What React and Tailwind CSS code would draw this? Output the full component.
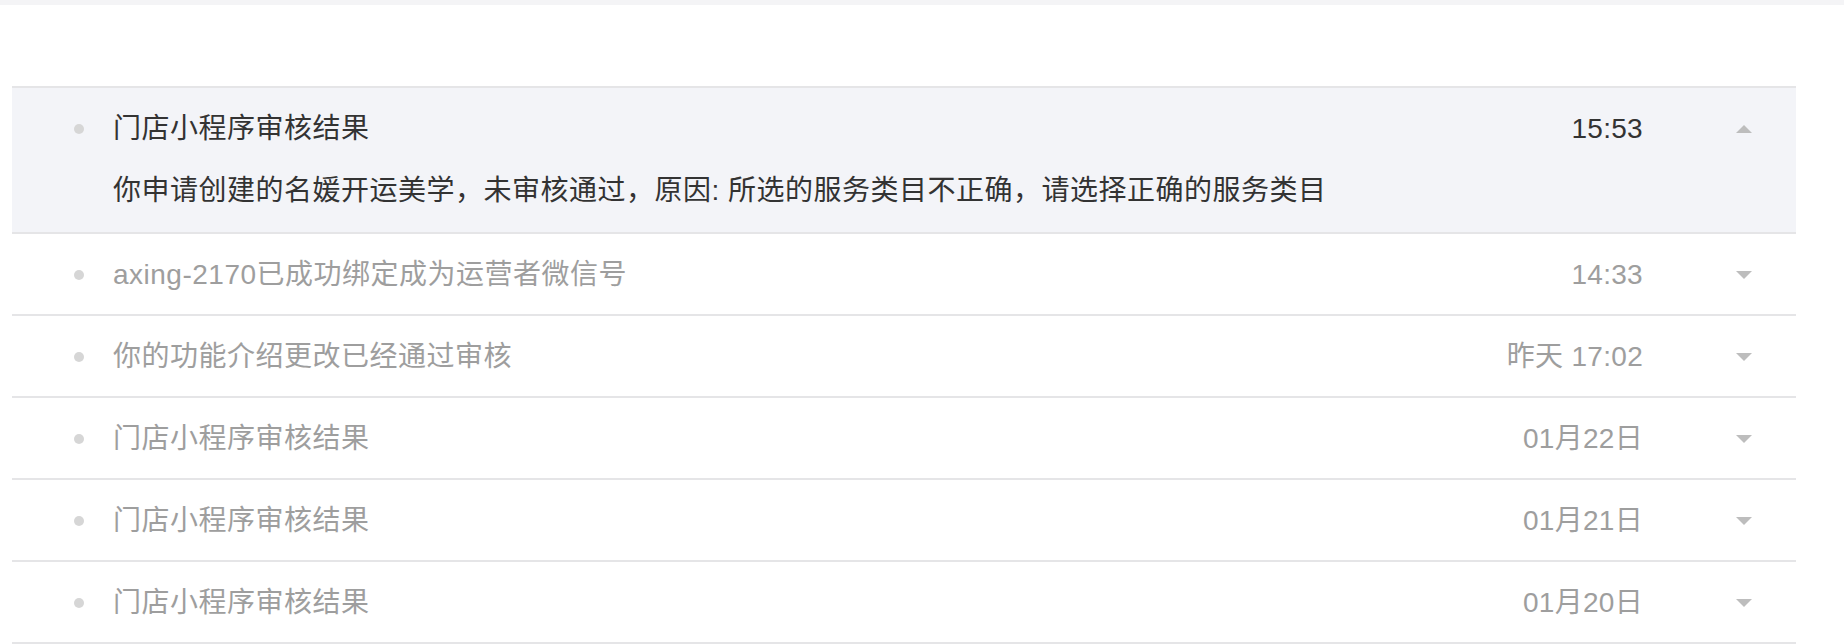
import React from "react";

const rows = [
  { title: "axing-2170已成功绑定成为运营者微信号", time: "14:33" },
  { title: "你的功能介绍更改已经通过审核", time: "昨天 17:02" },
  { title: "门店小程序审核结果", time: "01月22日" },
  { title: "门店小程序审核结果", time: "01月21日" },
  { title: "门店小程序审核结果", time: "01月20日" },
];

const font = { fontFamily: '"Liberation Sans", "Noto Sans CJK SC", sans-serif' };

function Header({ title, time, open }) {
  return (
    <div className="flex h-[80px] items-center pl-[62px] pr-[44px] pt-[2px]">
      <span className="mr-[29px] h-[10px] w-[10px] shrink-0 rounded-full bg-[#d6d6d6]" />
      <span className={`flex-1 text-[28px] leading-[40px] tracking-[0.5px] ${open ? "text-[#333333]" : "text-[#9e9e9e]"}`}>{title}</span>
      <span className={`text-[28px] leading-[40px] tracking-[0.3px] ${open ? "text-[#333333]" : "text-[#9e9e9e]"}`}>{time}</span>
      <span className="ml-[93px] flex h-[16px] w-[16px] items-center justify-center">
        {open ? (
          <span className="h-0 w-0 border-x-[8px] border-b-[8px] border-x-transparent border-b-[#bdbdbd]" />
        ) : (
          <span className="h-0 w-0 border-x-[8px] border-t-[8px] border-x-transparent border-t-[#bdbdbd]" />
        )}
      </span>
    </div>
  );
}

export default function App() {
  return (
    <div className="h-[644px] w-[1844px] overflow-hidden bg-white" style={font}>
      <div className="h-[5px] bg-[#f4f4f6]" />
      <div className="ml-[12px] mt-[81px] w-[1784px] border-t-2 border-[#e5e5e7]">
        <div className="border-b-2 border-[#e5e5e7] bg-[#f3f4f8]">
          <Header title="门店小程序审核结果" time="15:53" open />
          <div className="pb-[21px] pl-[101px] pt-[3px] text-[28px] leading-[40px] tracking-[0.5px] text-[#333333]">
            你申请创建的名媛开运美学，未审核通过，原因: 所选的服务类目不正确，请选择正确的服务类目
          </div>
        </div>
        {rows.map((r, i) => (
          <div key={i} className="border-b-2 border-[#e5e5e7]">
            <Header title={r.title} time={r.time} />
          </div>
        ))}
      </div>
    </div>
  );
}
